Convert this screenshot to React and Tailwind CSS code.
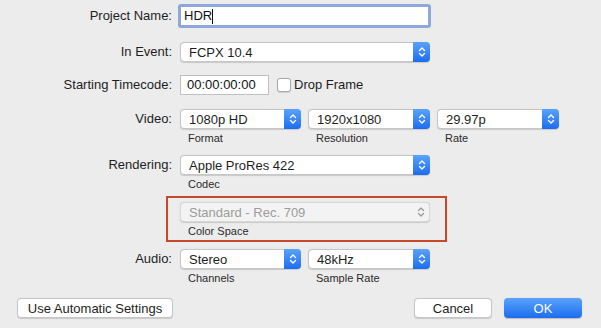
const FONT = { fontFamily: '"Liberation Sans", Arial, sans-serif' };

function Stepper({ disabled }) {
  return (
    <span
      className={
        disabled
          ? 'w-[17px] h-full flex items-center justify-center shrink-0'
          : 'w-[17px] h-[calc(100%+2px)] -my-px -mr-px flex items-center justify-center shrink-0 rounded-r-[4px] bg-gradient-to-b from-[#5aa2fa] to-[#1b6cf0]'
      }
    >
      <svg width="8" height="12" viewBox="0 0 8 12" fill="none">
        <path
          d="M1.5 4.5 L4 2 L6.5 4.5 M1.5 7.5 L4 10 L6.5 7.5"
          stroke={disabled ? '#9a9a9a' : '#ffffff'}
          strokeWidth="1.4"
          strokeLinecap="round"
          strokeLinejoin="round"
        />
      </svg>
    </span>
  );
}

function Popup({ value, width, disabled }) {
  return (
    <div
      className={
        'h-[20px] flex items-center rounded-[4px] border shadow-[0_0.5px_1px_rgba(0,0,0,0.15)] ' +
        (disabled ? 'bg-[#f3f3f3] border-[#d8d8d8]' : 'bg-white border-[#c6c6c6]')
      }
      style={{ width }}
    >
      <span className={'flex-1 pl-[8px] text-[13px] leading-none ' + (disabled ? 'text-[#9c9c9c]' : 'text-[#1e1e1e]')}>
        {value}
      </span>
      <Stepper disabled={disabled} />
    </div>
  );
}

function Sub({ children }) {
  return <div className="pl-[8px] mt-[3px] text-[11px] leading-[13px] text-[#2a2a2a]">{children}</div>;
}

function Row({ label, children, className = '' }) {
  return (
    <div className={'flex items-start ' + className}>
      <div className="w-[172px] shrink-0 h-[20px] flex items-center justify-end text-[13px] text-[#1e1e1e]">
        {label}
      </div>
      <div className="ml-[8px] flex items-start gap-[7px]">{children}</div>
    </div>
  );
}

export default function App() {
  return (
    <div className="w-[601px] h-[328px] bg-[#ececec] flex flex-col overflow-hidden" style={FONT}>
      <Row label="Project Name:" className="mt-[6px]">
        <div className="-ml-[2px] w-[253px] h-[24px] -mt-[2px] rounded-[3px] border-[3px] border-[#8ea8dc] bg-white flex items-center">
          <span className="pl-[3px] text-[13px] text-[#111]">HDR</span>
          <span className="w-px h-[15px] bg-[#111]" />
        </div>
      </Row>

      <Row label="In Event:" className="mt-[14px]">
        <Popup value="FCPX 10.4" width={250} />
      </Row>

      <Row label="Starting Timecode:" className="mt-[13px]">
        <div className="w-[89px] h-[20px] bg-white border border-[#c0c0c0] flex items-center pl-[6px] text-[13px] text-[#111]">
          00:00:00:00
        </div>
        <div className="h-[20px] flex items-center ml-[1px] gap-[3px] text-[13px] text-[#1e1e1e]">
          <span className="w-[14px] h-[14px] rounded-[3px] border border-[#a9a9a9] bg-white shadow-[0_0.5px_1px_rgba(0,0,0,0.12)]" />
          Drop Frame
        </div>
      </Row>

      <Row label="Video:" className="mt-[14px]">
        <div>
          <Popup value="1080p HD" width={121} />
          <Sub>Format</Sub>
        </div>
        <div>
          <Popup value="1920x1080" width={122} />
          <Sub>Resolution</Sub>
        </div>
        <div>
          <Popup value="29.97p" width={122} />
          <Sub>Rate</Sub>
        </div>
      </Row>

      <Row label="Rendering:" className="mt-[10px]">
        <div>
          <Popup value="Apple ProRes 422" width={250} />
          <Sub>Codec</Sub>
        </div>
      </Row>

      <div className="flex mt-[5px]">
        <div className="w-[166px] shrink-0" />
        <div className="w-[281px] h-[46px] border-2 border-[#c9472b] pl-[12px] pt-[4px]">
          <Popup value="Standard - Rec. 709" width={250} disabled />
          <Sub>Color Space</Sub>
        </div>
      </div>

      <Row label="Audio:" className="mt-[7px]">
        <div>
          <Popup value="Stereo" width={121} />
          <Sub>Channels</Sub>
        </div>
        <div>
          <Popup value="48kHz" width={122} />
          <Sub>Sample Rate</Sub>
        </div>
      </Row>

      <div className="flex items-center mt-[13px] px-[17px]">
        <button className="w-[156px] h-[20px] bg-white rounded-[4px] border border-[#c6c6c6] shadow-[0_0.5px_1px_rgba(0,0,0,0.15)] text-[13px] text-[#1e1e1e] leading-none">
          Use Automatic Settings
        </button>
        <div className="flex-1" />
        <button className="w-[78px] h-[20px] bg-white rounded-[4px] border border-[#c6c6c6] shadow-[0_0.5px_1px_rgba(0,0,0,0.15)] text-[13px] text-[#1e1e1e] leading-none">
          Cancel
        </button>
        <button className="ml-[12px] mr-[2px] w-[78px] h-[20px] rounded-[4px] bg-gradient-to-b from-[#5aa2fa] to-[#1b6cf0] shadow-[0_0.5px_1px_rgba(0,0,0,0.2)] text-[13px] text-white leading-none">
          OK
        </button>
      </div>
    </div>
  );
}
